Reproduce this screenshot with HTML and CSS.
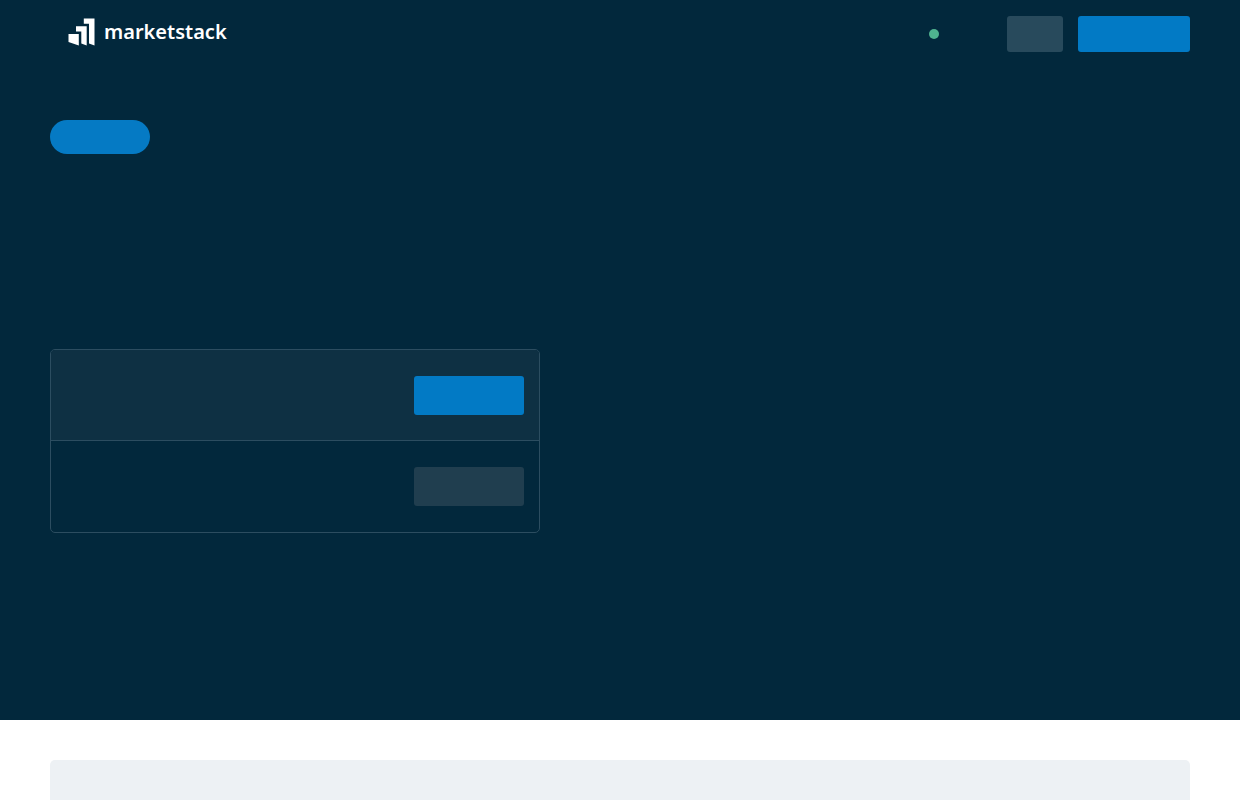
FILE: index.html
```html
<!DOCTYPE html>
<html lang="en">
<head>
<meta charset="utf-8">
<meta name="viewport" content="width=device-width, initial-scale=1">
<title>marketstack</title>
<link rel="stylesheet" href="styles.css">
</head>
<body>
<div class="hero">
  <header class="header">
    <a class="logo" href="#">
      <svg class="logo-mark" viewBox="0 0 27 28" aria-hidden="true">
        <path d="M0.500 16H10.800V27.500L0.500 24Z"/>
        <path d="M8 8.300H18.700V27.500L13.300 25.600V13.500H8Z"/>
        <path d="M15.800 0.500H26.500V27.500L21 25.600V5.800H15.800Z"/>
      </svg>
      <span class="logo-text">marketstack</span>
    </a>
    <nav class="nav" aria-label="Account">
      <span class="status"></span>
      <button class="button button-muted nav-small" type="button" aria-label="Log in"></button>
      <button class="button button-primary nav-large" type="button" aria-label="Sign up"></button>
    </nav>
  </header>
  <main class="intro">
    <button class="pill" type="button" aria-label="News"></button>
    <div class="headline"></div>
    <section class="panel">
      <div class="row row-active">
        <button class="button button-primary row-button" type="button" aria-label="First option"></button>
      </div>
      <div class="row">
        <button class="button button-dim row-button" type="button" aria-label="Second option"></button>
      </div>
    </section>
  </main>
</div>
<section class="below">
  <div class="card"></div>
</section>
</body>
</html>
```
FILE: styles.css
```css
* {
  box-sizing: border-box;
}

body {
  margin: 0;
  background: #fff;
  font-family: "Noto Sans", "Open Sans", sans-serif;
}

.hero {
  min-height: 90vh;
  padding: 0 50px;
  background: #02283c;
}

.header {
  display: flex;
  align-items: center;
  justify-content: space-between;
  padding: 16px 0;
}

.logo {
  display: flex;
  align-items: center;
  gap: 9px;
  height: 36px;
  padding-left: 18px;
  color: #fff;
  text-decoration: none;
}

.logo-mark {
  width: 27px;
  height: 28px;
  margin-bottom: 4px;
  fill: #fff;
}

.logo-text {
  padding-bottom: 4px;
  font-size: 20px;
  line-height: 28px;
  font-weight: 600;
}

.nav {
  display: flex;
  align-items: center;
  gap: 15px;
}

.status {
  width: 10px;
  height: 10px;
  margin-right: 53px;
  border-radius: 50%;
  background: #4fb28f;
}

.button {
  border: 0;
  border-radius: 3px;
}

.button-primary {
  background: #027ac5;
}

.button-muted {
  background: #284a5c;
}

.button-dim {
  background: #203e4f;
}

.nav-small {
  width: 56px;
  height: 36px;
}

.nav-large {
  width: 112px;
  height: 36px;
}

.intro {
  padding-top: 52px;
}

.pill {
  display: block;
  width: 100px;
  height: 34px;
  border: 0;
  border-radius: 17px;
  background: #057ac4;
}

.headline {
  min-height: 195px;
}

.panel {
  max-width: 490px;
  border: 1px solid #2c4d60;
  border-radius: 5px;
  overflow: hidden;
}

.row {
  display: flex;
  justify-content: flex-end;
  padding: 26px 15px;
}

.row-active {
  padding-bottom: 25px;
  border-bottom: 1px solid #2c4d60;
  background: #0e3043;
}

.row-button {
  width: 110px;
  height: 39px;
}

.below {
  padding: 40px 50px 0;
}

.card {
  min-height: 40px;
  border-radius: 5px 5px 0 0;
  background: #edf1f4;
}
```
